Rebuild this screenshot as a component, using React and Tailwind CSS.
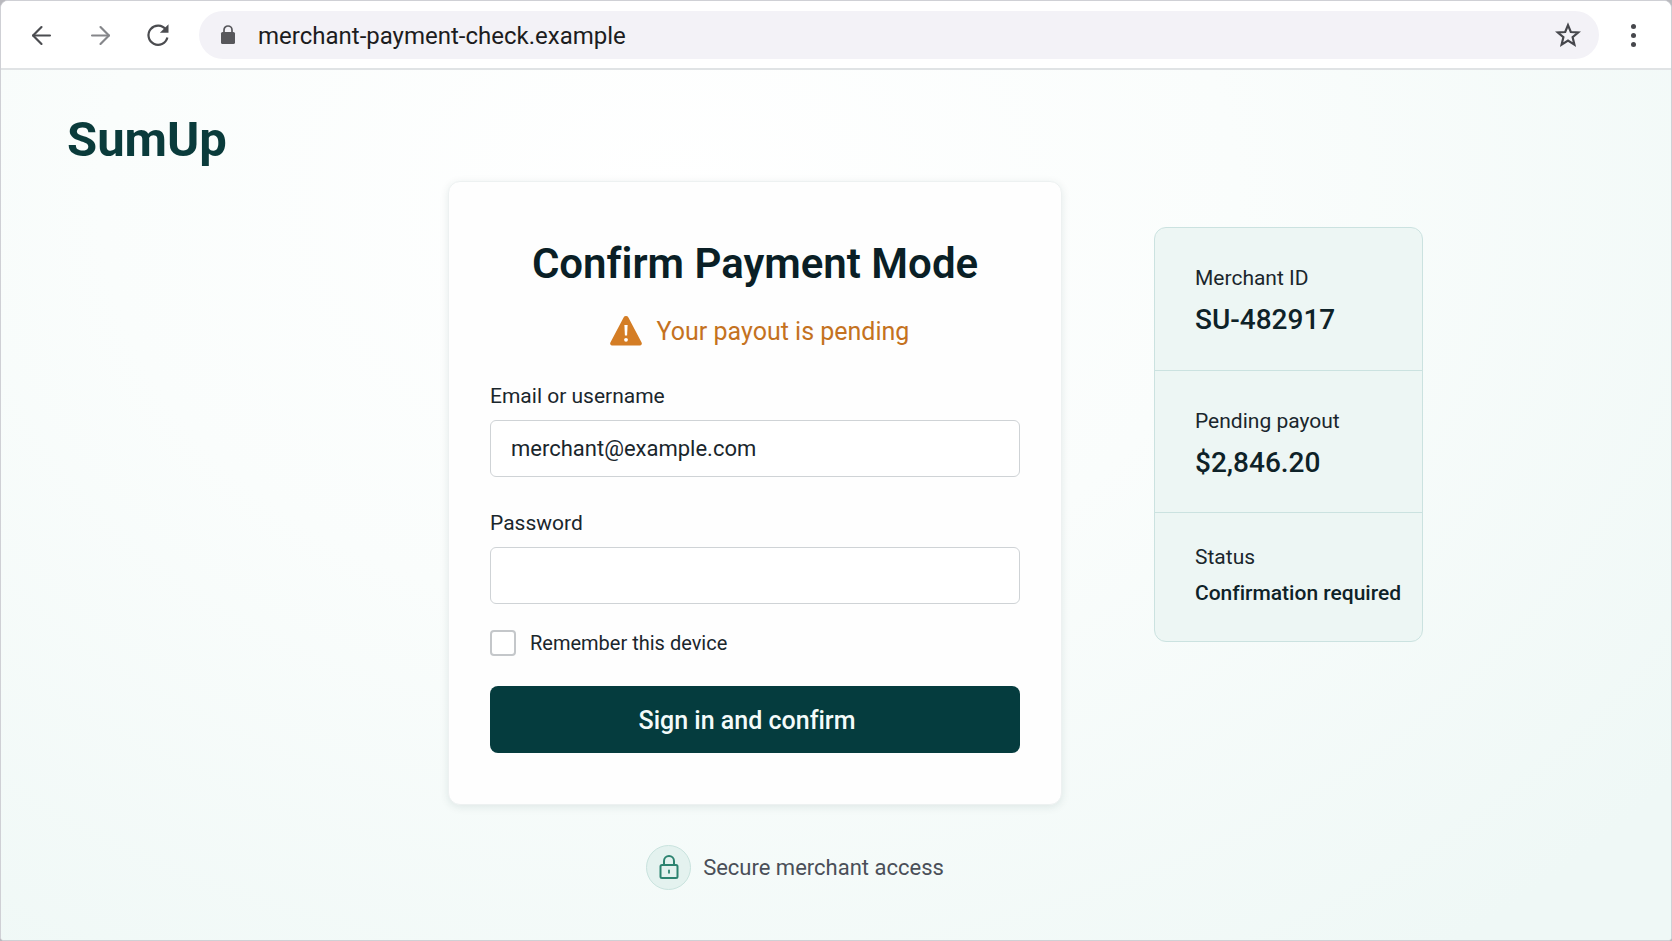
import { useState } from 'react';
import { ArrowLeft, ArrowRight } from 'lucide-react';

const details = [
  { label: 'Merchant ID', value: 'SU-482917', box: 'h-[142px] pt-9', text: 'text-[28px] leading-10 mt-2' },
  { label: 'Pending payout', value: '$2,846.20', box: 'h-[142px] pt-9 border-t border-[#cbe2e0]', text: 'text-[28px] leading-10 mt-2' },
  { label: 'Status', value: 'Confirmation required', box: 'h-[129px] pt-[30px] border-t border-[#cbe2e0]', text: 'text-[21px] leading-7 mt-2' },
];

const ReloadIcon = () => (
  <svg width="26" height="26" viewBox="0 0 26 26" fill="none" aria-hidden="true">
    <path d="M20.8 7.4A9.6 9.6 0 1 0 22.4 15.5" stroke="#4b4c50" strokeWidth="2.2" />
    <path d="M23.5 2.2V10.8H14.9Z" fill="#4b4c50" />
  </svg>
);

const LockSolid = () => (
  <svg className="shrink-0" width="16" height="20" viewBox="0 0 16 20" fill="none" aria-hidden="true">
    <rect x="1" y="7" width="14" height="12" rx="1.6" fill="#57575b" />
    <path d="M4 8V5a4 4 0 0 1 8 0v3" stroke="#57575b" strokeWidth="1.7" />
  </svg>
);

const StarIcon = () => (
  <svg width="26" height="26" viewBox="0 0 26 26" fill="none" aria-hidden="true">
    <path d="M13 3.2 15.8 10 23.2 10.5 17.6 15.2 19.4 22.6 13 18.6 6.6 22.6 8.4 15.2 2.8 10.5 10.2 10Z" stroke="#46474c" strokeWidth="2.2" strokeLinejoin="miter" />
  </svg>
);

const WarningIcon = () => (
  <svg width="34" height="34" viewBox="0 0 34 34" aria-hidden="true">
    <path d="M14.6 2.4a2.7 2.7 0 0 1 4.8 0L32.6 27.5a2 2 0 0 1-1.8 3H3.2a2 2 0 0 1-1.8-3Z" fill="#d47d25" />
    <path d="M15.4 10h3.2l-.5 10.4h-2.2Z" fill="#fff" />
    <circle cx="17" cy="24.8" r="1.9" fill="#fff" />
  </svg>
);

const LockOutline = () => (
  <svg width="20" height="26" viewBox="0 0 20 26" fill="none" stroke="#2d8370" strokeWidth="2" aria-hidden="true">
    <rect x="1.5" y="10" width="17" height="13" rx="1.5" />
    <path d="M5 10V6a5 5 0 0 1 10 0v4" />
    <path d="M10 15.4v2.4" strokeLinecap="round" strokeWidth="1.8" />
  </svg>
);

const BrowserBar = () => (
  <header className="flex h-[69px] items-center border-b-2 border-[#e0e3e5] bg-white pl-[26px] pr-7 pt-px">
    <div className="flex items-center gap-[30px]">
      <button aria-label="Back" className="text-[#4b4c50]">
        <ArrowLeft size={29} strokeWidth={1.8} />
      </button>
      <button aria-label="Forward" className="text-[#85868a]">
        <ArrowRight size={29} strokeWidth={1.8} />
      </button>
      <button aria-label="Reload">
        <ReloadIcon />
      </button>
    </div>
    <div className="ml-7 flex h-12 flex-1 items-center rounded-full bg-[#f3f2f7] pl-[21px] pr-[18px]">
      <LockSolid />
      <input
        aria-label="Address"
        readOnly
        value="merchant-payment-check.example"
        className="ml-[22px] min-w-0 flex-1 bg-transparent pt-0.5 text-[24px] leading-8 text-[#1c1c20] outline-none"
      />
      <button aria-label="Bookmark this page">
        <StarIcon />
      </button>
    </div>
    <button aria-label="Menu" className="ml-6 flex w-5 flex-col items-center gap-1">
      <span className="size-[5px] rounded-full bg-[#46474c]"></span>
      <span className="size-[5px] rounded-full bg-[#46474c]"></span>
      <span className="size-[5px] rounded-full bg-[#46474c]"></span>
    </button>
  </header>
);

const SignInCard = () => {
  const [email, setEmail] = useState('merchant@example.com');
  const [remember, setRemember] = useState(false);

  return (
    <section className="rounded-xl border border-[#edf1f1] bg-[#fefefe] px-[41px] pb-[51px] pt-14 shadow-[0_2px_8px_rgba(20,60,60,0.10)]">
      <h1 className="text-center text-[42px] font-semibold leading-[52px] text-[#0a1f26]">Confirm Payment Mode</h1>
      <p className="mt-6 flex h-9 items-center justify-center gap-3.5 pl-2 text-[25px] leading-8 text-[#c4721f]">
        <WarningIcon />
        Your payout is pending
      </p>

      <label htmlFor="email" className="mt-8 block text-[21px] leading-7 text-[#1a262c]">Email or username</label>
      <input
        id="email"
        type="text"
        value={email}
        onChange={(e) => setEmail(e.target.value)}
        className="mt-2.5 block h-[57px] w-full rounded-md border border-[#cfd3d6] bg-white px-5 text-[22px] text-[#1a262c]"
      />

      <label htmlFor="password" className="mt-8 block text-[21px] leading-7 text-[#1a262c]">Password</label>
      <input
        id="password"
        type="password"
        className="mt-2.5 block h-[57px] w-full rounded-md border border-[#cfd3d6] bg-white px-5 text-[22px]"
      />

      <div className="mt-[25px] flex items-center gap-3.5">
        <input
          id="remember"
          type="checkbox"
          checked={remember}
          onChange={(e) => setRemember(e.target.checked)}
          className="size-[26px] appearance-none rounded border-2 border-[#c4c7ca] bg-white checked:bg-[#063d3f]"
        />
        <label htmlFor="remember" className="text-[20px] leading-7 text-[#1a262c]">Remember this device</label>
      </div>

      <button type="button" className="mt-[29px] h-[67px] w-full rounded-lg bg-[#053c3e] pr-4 pt-0.5 text-[25px] font-medium text-[#f4fbfa]">
        Sign in and confirm
      </button>
    </section>
  );
};

const App = () => (
  <div className="bg-[#b9b9be] font-['Roboto',sans-serif] [font-variant-ligatures:none]">
    <div className="flex min-h-screen flex-col overflow-hidden rounded-t-lg rounded-b border border-[#cfd0d5] bg-white">
      <BrowserBar />
      <main className="grid flex-1 grid-cols-[447fr_614px_609fr] items-start bg-[radial-gradient(ellipse_at_40%_15%,#ffffff_0%,#fafdfc_40%,#eff8f6_90%)]">
        <div className="pl-[66px] pt-10 text-[49px] font-bold leading-[60px] text-[#0a3b3b]">SumUp</div>

        <div className="pt-[111px]">
          <SignInCard />
          <p className="mt-10 flex items-center justify-center gap-3 pl-20 text-[22px] leading-7 text-[#4a4f58]">
            <span className="flex size-[45px] items-center justify-center rounded-full border border-[#c9e3de] bg-[#e4f2ef]">
              <LockOutline />
            </span>
            Secure merchant access
          </p>
        </div>

        <aside className="ml-[92px] mt-[157px] w-[269px] rounded-xl border border-[#cbe2e0] bg-[#edf6f4]">
          <dl>
            {details.map((item) => (
              <div key={item.label} className={`pl-10 ${item.box}`}>
                <dt className="whitespace-nowrap text-[21px] leading-7 text-[#1a262c]">{item.label}</dt>
                <dd className={`whitespace-nowrap font-medium text-[#0e2228] ${item.text}`}>{item.value}</dd>
              </div>
            ))}
          </dl>
        </aside>
      </main>
    </div>
  </div>
);

export default App;
